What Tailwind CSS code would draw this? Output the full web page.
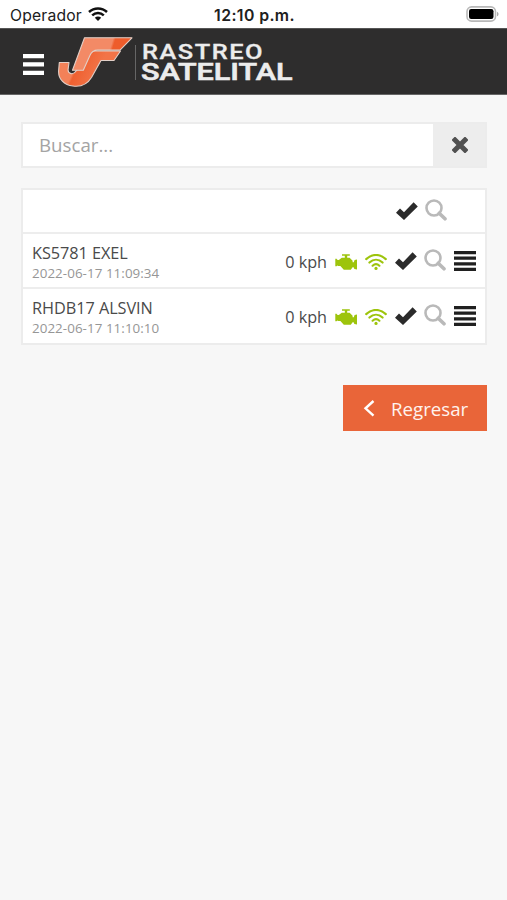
<!DOCTYPE html>
<html lang="es">
<head>
<meta charset="utf-8">
<meta name="viewport" content="width=device-width, initial-scale=1">
<title>Rastreo Satelital</title>
<script src="https://cdn.jsdelivr.net/npm/@tailwindcss/browser@4"></script>
</head>
<body class="h-[900px] overflow-hidden bg-[#f7f7f7] font-['Open_Sans',sans-serif] text-[#4a4a4a]">
<svg class="hidden">
  <symbol id="check" viewBox="0 0 22 18"><path d="M0 10.7 4 6.6 8 10.2 17.6.2 21.8 4.6 8 18Z" fill="#2b2b2b"/></symbol>
  <symbol id="search" viewBox="0 0 22 22"><circle cx="9" cy="9" r="7.5" fill="none" stroke="#b9b9b9" stroke-width="2.6"/><path d="m14.2 14.2 5.8 5.6" stroke="#b9b9b9" stroke-width="3.6" stroke-linecap="round"/></symbol>
  <symbol id="wifi" viewBox="0 0 22 16"><g fill="none" stroke="#9dc40c" stroke-width="2.2" stroke-linecap="round"><path d="M1.2 5.1C7-.4 15-.4 20.8 5.1"/><path d="M4.4 8.5c4-3.7 9.2-3.7 13.2 0"/><path d="M7.6 11.700c2.100-1.900 4.700-1.900 6.800 0"/></g><circle cx="11" cy="14.400" r="1.600" fill="#9dc40c"/></symbol>
  <symbol id="engine" viewBox="0 0 22 16"><path fill="#9dc40c" d="M7 .2h7.800v1.600h-2.600v2h2.400l3 2.900v1.600h1.200l.8-2.400 2.400-.5v10l-2.600-.4-.8-1.800h-1l-1.800 2.600H8.800L5.400 12H3.200l-1-.6-.6.8H.3V4.800h1.300l.6 1 1 .2h.6l3-2.200h3v-2H7Z"/></symbol>
  <symbol id="list" viewBox="0 0 22 20"><path fill="#202020" d="M0 0h22v3.200H0zm0 5.600h22v3.200H0zm0 5.600h22v3.200H0zM0 16.800h22V20H0z"/></symbol>
</svg>

<div class="grid h-7 grid-cols-3 items-center bg-white pt-[3px] pr-[8px] pl-[10px] font-['Inter',sans-serif] text-[#202020]">
  <div class="flex items-center gap-[6px]">
    <span class="text-[15.7px] leading-5 tracking-[0.2px]">Operador</span>
    <svg class="mb-[3px] h-[14px] w-5 shrink-0" viewBox="0 0 20 14"><g fill="none" stroke="#111" stroke-width="2.5"><path d="M1 5c5.200-4.800 12.800-4.800 18 0"/><path d="M4.200 8.300c3.400-3.100 8.200-3.100 11.600 0"/></g><path fill="#111" d="M6.800 10.800c1.900-1.600 4.500-1.600 6.400 0L10 14Z"/></svg>
  </div>
  <div class="text-center text-[15.8px] leading-5 font-semibold tracking-[0.4px] whitespace-nowrap">12:10 p.m.</div>
  <svg class="mb-[3px] h-4 w-[33px] justify-self-end" viewBox="0 0 33 16"><rect x="1" y=".9" width="28.5" height="14.2" rx="4.6" fill="#fff" stroke="#b8b8b8" stroke-width="1.6"/><rect x="3" y="3" width="24.5" height="10" rx="2.2" fill="#000"/><path d="M31 5.7c2 .8 2 3.8 0 4.6Z" fill="#aaa"/></svg>
</div>

<header class="flex h-[67px] items-center border-y border-t-[#555] border-b-[#666] bg-[#2e2d2d] pl-[23px]">
  <svg class="mt-[5px] h-[21px] w-[21px]" viewBox="0 0 21 21"><path fill="#fff" d="M0 0h21v4.200H0zm0 8.300h21v4.200H0zm0 8.400h21v4.200H0z"/></svg>
  <svg class="ml-[14px] h-[52px] w-[236px]" viewBox="58 36 236 52" role="img">
    <defs>
      <linearGradient id="stroke-j" gradientUnits="userSpaceOnUse" x1="62" y1="60" x2="96" y2="76"><stop offset=".4" stop-color="#f38158"/><stop offset=".46" stop-color="#ee6030"/><stop offset="1" stop-color="#f27448"/></linearGradient>
      <linearGradient id="stroke-f" gradientUnits="userSpaceOnUse" x1="80" y1="40" x2="126" y2="54"><stop offset=".65" stop-color="#f38a66"/><stop offset=".7" stop-color="#ee5c2b"/></linearGradient>
    </defs>
    <g stroke="#e2cfc7" stroke-width="1.1" stroke-linejoin="round">
      <path fill="url(#stroke-j)" d="M92 51h28.500l-6.500 9.500h-13L91.500 77.500c-4 6.500-11 9.500-18.500 8.500-9-1-14.700-7-14.400-15l.7-8.500H69l-.9 7c-.4 4.500 5.400 6 8.100 1.300Z"/>
      <path fill="url(#stroke-f)" d="M84.500 37.800h47.500l-12 12.300H97.500c-4 0-6 1.700-7.600 5.400L83.300 70.200H72.500l5.800-15.700Z"/>
    </g>
    <path d="M135.500 45v35" stroke="#666" stroke-width="1"/>
    <g fill="#ececec" font-family="Roboto, sans-serif">
      <text x="142" y="58.500" font-size="20" font-weight="500" textLength="122" lengthAdjust="spacingAndGlyphs" letter-spacing="1.200" stroke="#ececec" stroke-width=".3">RASTREO</text>
      <text x="141" y="80" font-size="23" font-weight="500" textLength="151.500" lengthAdjust="spacingAndGlyphs" stroke="#ececec" stroke-width=".6">SATELITAL</text>
    </g>
  </svg>
</header>

<main class="px-[21px] pt-[27px]">
  <div class="flex h-[46px] w-[466px] border-2 border-[#ececec] bg-white">
    <input class="min-w-0 flex-1 px-4 text-[18.7px] placeholder:text-[#a4a4a4]" placeholder="Buscar...">
    <button class="flex w-[52px] items-center justify-center bg-[#ededed] pl-px"><svg class="h-4 w-4" viewBox="0 0 16 16"><path d="m3 3 10 10m0-10L3 13" stroke="#505050" stroke-width="5" stroke-linecap="square"/></svg></button>
  </div>

  <section class="mt-5 w-[466px] divide-y-2 divide-[#ededed] border-2 border-[#ececec] bg-white">
    <div class="flex h-[44px] items-center justify-end pr-[38px]">
      <svg class="mr-[7px] h-[18px] w-[22px]"><use href="#check"/></svg>
      <svg class="mt-[-2px] h-[22px] w-[22px]"><use href="#search"/></svg>
    </div>
    <div class="flex h-[55px] items-center pr-[9px] pl-[9px]">
      <div class="flex-1 pt-[3px]"><div class="text-[16.3px] leading-[22px] tracking-[-0.05px]">KS5781 EXEL</div><div class="text-[13.4px] leading-[19px] tracking-[0.05px] text-[#969696]">2022-06-17 11:09:34</div></div>
      <span class="mt-[3px] mr-2 text-[16.2px]">0 kph</span>
      <svg class="mt-[2px] mr-2 h-4 w-[22px]"><use href="#engine"/></svg>
      <svg class="mt-[2px] mr-2 h-4 w-[22px]"><use href="#wifi"/></svg>
      <svg class="mr-[7px] h-[18px] w-[22px]"><use href="#check"/></svg>
      <svg class="mt-[-2px] mr-[8px] h-[22px] w-[22px]"><use href="#search"/></svg>
      <svg class="h-5 w-[22px]"><use href="#list"/></svg>
    </div>
    <div class="flex h-[54px] items-center pr-[9px] pl-[9px]">
      <div class="flex-1 pt-[3px]"><div class="text-[16.3px] leading-[22px] tracking-[-0.05px]">RHDB17 ALSVIN</div><div class="text-[13.4px] leading-[19px] tracking-[0.05px] text-[#969696]">2022-06-17 11:10:10</div></div>
      <span class="mt-[3px] mr-2 text-[16.2px]">0 kph</span>
      <svg class="mt-[2px] mr-2 h-4 w-[22px]"><use href="#engine"/></svg>
      <svg class="mt-[2px] mr-2 h-4 w-[22px]"><use href="#wifi"/></svg>
      <svg class="mr-[7px] h-[18px] w-[22px]"><use href="#check"/></svg>
      <svg class="mt-[-2px] mr-[8px] h-[22px] w-[22px]"><use href="#search"/></svg>
      <svg class="h-5 w-[22px]"><use href="#list"/></svg>
    </div>
  </section>

  <div class="mt-10 flex w-[466px] justify-end">
    <button class="flex h-[46px] w-[144px] items-center bg-[#e96539] pl-5 text-[18.7px] text-[#fff3ee]">
      <svg class="mr-4 h-[17px] w-3" viewBox="0 0 12 17"><path d="M10.500 1 2.500 8.300l8 7.300" fill="none" stroke="#fff" stroke-width="2.400"/></svg><span class="pt-[2px]">Regresar</span>
    </button>
  </div>
</main>
</body>
</html>
